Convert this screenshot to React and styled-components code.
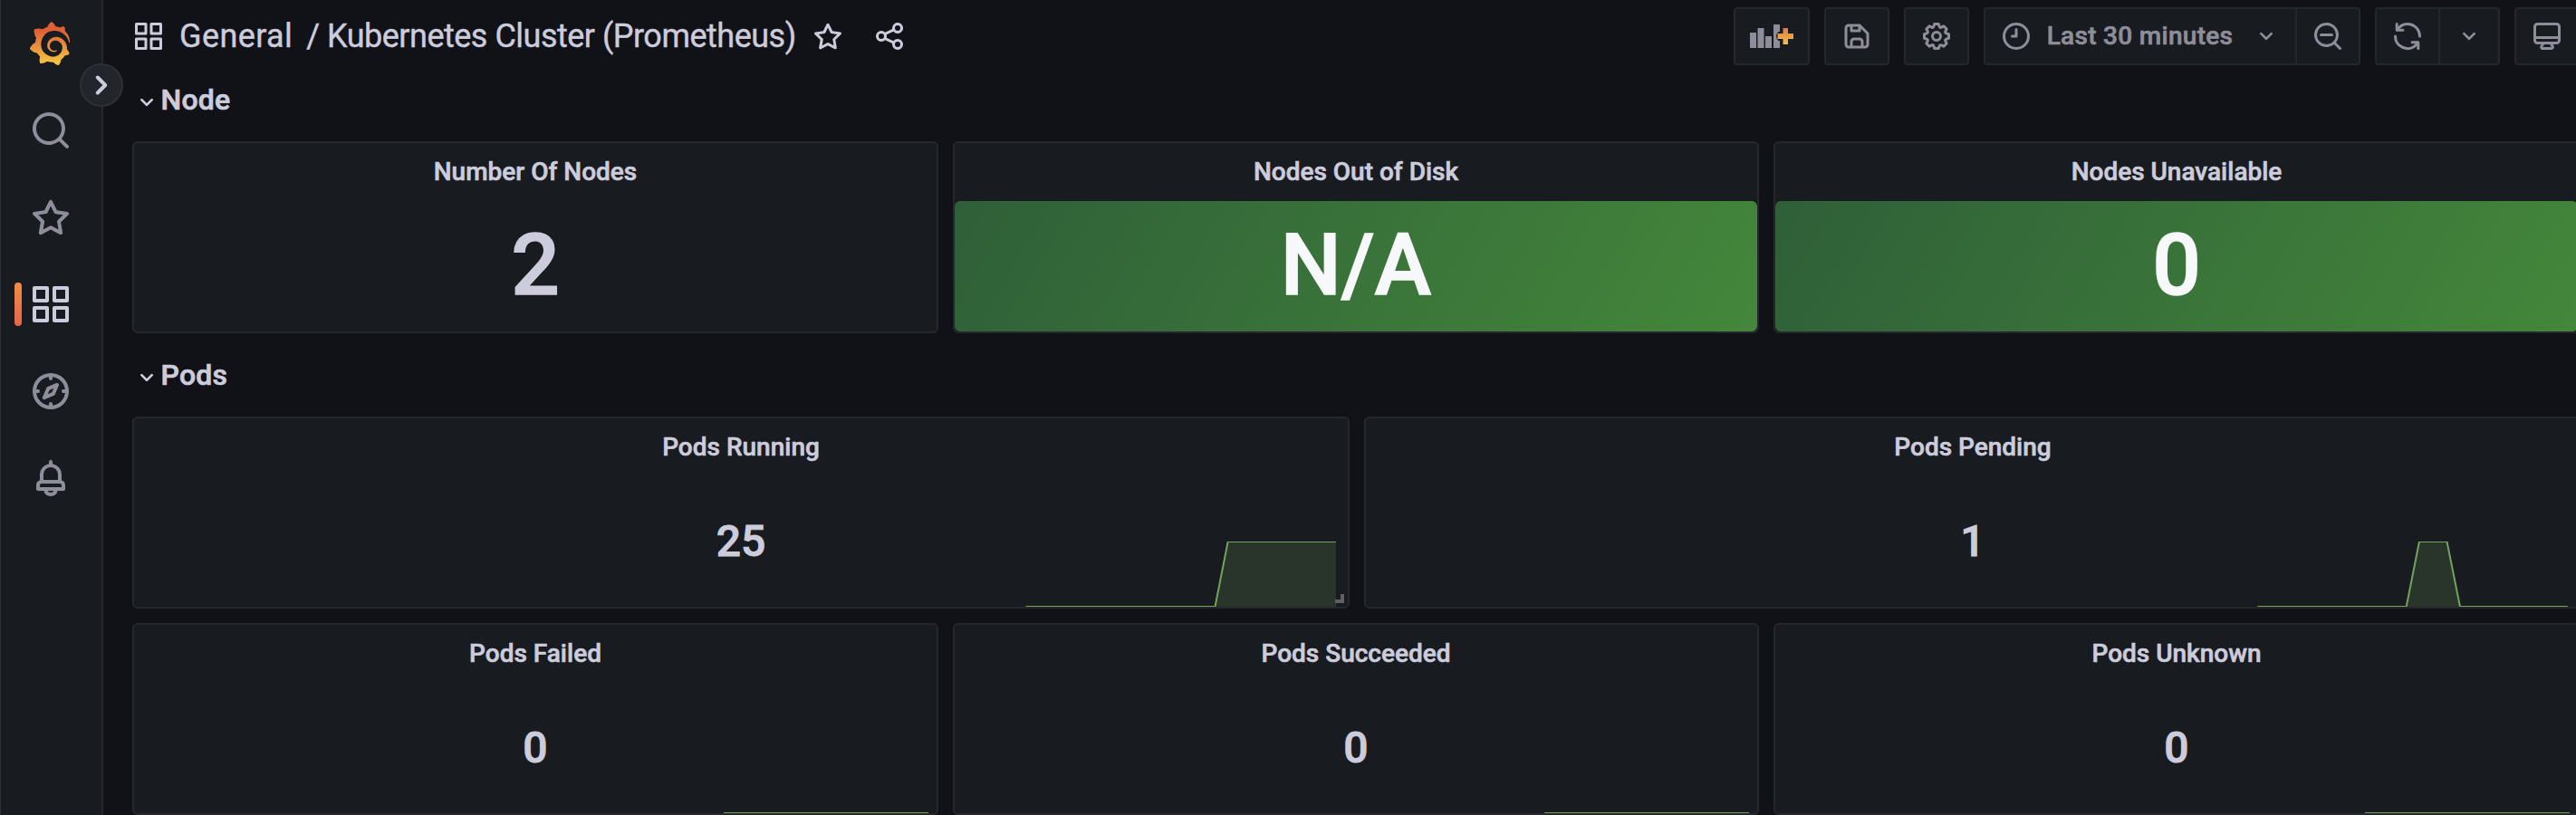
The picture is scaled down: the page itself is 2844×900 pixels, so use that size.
import React from "react";
import styled, { createGlobalStyle } from "styled-components";
import { SiGrafana } from "react-icons/si";

const color = {
  canvas: "#111217",
  surface: "#181b1f",
  raised: "#22252b",
  border: "#25272c",
  text: "#ccccdc",
  muted: "#8e8e9a",
  green: "#73a35b",
};

const GlobalStyle = createGlobalStyle`
  *, *::before, *::after { box-sizing: border-box; }
  html, body { margin: 0; background: ${color.canvas}; }
  body {
    width: 2844px;
    height: 900px;
    overflow: hidden;
    color: ${color.text};
    font-family: Roboto, "Liberation Sans", sans-serif;
  }
`;

const ICONS = {
  search:
    "M21.71,20.29,18,16.61A9,9,0,1,0,16.61,18l3.68,3.68a1,1,0,0,0,1.42,0A1,1,0,0,0,21.71,20.29ZM11,18a7,7,0,1,1,7-7A7,7,0,0,1,11,18Z",
  star: "M22,9.67A1,1,0,0,0,21.14,9l-5.69-.83L12.9,3a1,1,0,0,0-1.8,0L8.55,8.16,2.86,9a1,1,0,0,0-.81.68,1,1,0,0,0,.25,1l4.13,4-1,5.68A1,1,0,0,0,6.9,21.44L12,18.77l5.1,2.67a.93.93,0,0,0,.46.12,1,1,0,0,0,.59-.19,1,1,0,0,0,.4-1l-1-5.68,4.13-4A1,1,0,0,0,22,9.67Zm-6.15,4a1,1,0,0,0-.29.88l.72,4.2-3.76-2a1.06,1.06,0,0,0-.94,0l-3.76,2,.72-4.2a1,1,0,0,0-.29-.88l-3-3,4.21-.61a1,1,0,0,0,.76-.55L12,5.7l1.88,3.82a1,1,0,0,0,.76.55l4.21.61Z",
  apps: "M10,13H3a1,1,0,0,0-1,1v7a1,1,0,0,0,1,1h7a1,1,0,0,0,1-1V14A1,1,0,0,0,10,13ZM9,20H4V15H9ZM21,2H14a1,1,0,0,0-1,1v7a1,1,0,0,0,1,1h7a1,1,0,0,0,1-1V3A1,1,0,0,0,21,2ZM20,9H15V4h5Zm1,4H14a1,1,0,0,0-1,1v7a1,1,0,0,0,1,1h7a1,1,0,0,0,1-1V14A1,1,0,0,0,21,13Zm-1,7H15V15h5ZM10,2H3A1,1,0,0,0,2,3v7a1,1,0,0,0,1,1h7a1,1,0,0,0,1-1V3A1,1,0,0,0,10,2ZM9,9H4V4H9Z",
  compass:
    "M12,2A10,10,0,1,0,22,12,10,10,0,0,0,12,2Zm1,17.93V19a1,1,0,0,0-2,0v.93A8,8,0,0,1,4.07,13H5a1,1,0,0,0,0-2H4.07A8,8,0,0,1,11,4.07V5a1,1,0,0,0,2,0V4.07A8,8,0,0,1,19.93,11H19a1,1,0,0,0,0,2h.93A8,8,0,0,1,13,19.93ZM15.14,7.55l-5,2.12a1,1,0,0,0-.52.52l-2.12,5a1,1,0,0,0,.21,1.1,1,1,0,0,0,.7.3.93.93,0,0,0,.4-.09l5-2.12a1,1,0,0,0,.52-.52l2.12-5a1,1,0,0,0-1.31-1.31Zm-2.49,5.1-2.28,1,1-2.28,2.28-1Z",
  bell: "M18,13.18V10a6,6,0,0,0-5-5.91V3a1,1,0,0,0-2,0V4.09A6,6,0,0,0,6,10v3.18A3,3,0,0,0,4,16v2a1,1,0,0,0,1,1H8.14a4,4,0,0,0,7.72,0H19a1,1,0,0,0,1-1V16A3,3,0,0,0,18,13.18ZM8,10a4,4,0,0,1,8,0v3H8Zm4,10a2,2,0,0,1-1.72-1h3.44A2,2,0,0,1,12,20Zm6-3H6V16a1,1,0,0,1,1-1H17a1,1,0,0,1,1,1Z",
  angleDown:
    "M17,9.17a1,1,0,0,0-1.41,0L12,12.71,8.46,9.17a1,1,0,0,0-1.41,0,1,1,0,0,0,0,1.42l4.24,4.24a1,1,0,0,0,1.42,0L17,10.59A1,1,0,0,0,17,9.17Z",
  angleRight:
    "M14.83,11.29,10.59,7.05a1,1,0,0,0-1.42,0,1,1,0,0,0,0,1.41L12.71,12,9.17,15.54a1,1,0,0,0,0,1.41,1,1,0,0,0,.71.29,1,1,0,0,0,.71-.29l4.24-4.24A1,1,0,0,0,14.83,11.29Z",
  save: "M20.71,9.29l-6-6a1,1,0,0,0-.32-.21A1.09,1.09,0,0,0,14,3H6A3,3,0,0,0,3,6V18a3,3,0,0,0,3,3H18a3,3,0,0,0,3-3V10A1,1,0,0,0,20.71,9.29ZM9,5h4V7H9Zm6,14H9V16a1,1,0,0,1,1-1h4a1,1,0,0,1,1,1Zm4-1a1,1,0,0,1-1,1H17V16a3,3,0,0,0-3-3H10a3,3,0,0,0-3,3v3H6a1,1,0,0,1-1-1V6A1,1,0,0,1,6,5H7V8A1,1,0,0,0,8,9h6a1,1,0,0,0,1-1V6.41l4,4Z",
  cog: "M21.32,9.55l-1.89-.63.89-1.78A1,1,0,0,0,20.13,6L18,3.87a1,1,0,0,0-1.15-.19l-1.78.89-.63-1.89A1,1,0,0,0,13.5,2h-3a1,1,0,0,0-.95.68L8.92,4.57,7.14,3.68A1,1,0,0,0,6,3.87L3.87,6a1,1,0,0,0-.19,1.15l.89,1.78-1.89.63A1,1,0,0,0,2,10.5v3a1,1,0,0,0,.68.95l1.89.63-.89,1.78A1,1,0,0,0,3.87,18L6,20.13a1,1,0,0,0,1.15.19l1.78-.89.63,1.89a1,1,0,0,0,.95.68h3a1,1,0,0,0,.95-.68l.63-1.89,1.78.89A1,1,0,0,0,18,20.13L20.13,18a1,1,0,0,0,.19-1.15l-.89-1.78,1.89-.63A1,1,0,0,0,22,13.5v-3A1,1,0,0,0,21.32,9.55ZM20,12.78l-1.2.4A2,2,0,0,0,17.64,16l.57,1.14-1.1,1.1L16,17.64a2,2,0,0,0-2.79,1.16l-.4,1.2H11.22l-.4-1.2A2,2,0,0,0,8,17.64l-1.14.57-1.1-1.1L6.36,16A2,2,0,0,0,5.2,13.18L4,12.78V11.22l1.2-.4A2,2,0,0,0,6.36,8L5.79,6.89l1.1-1.1L8,6.36A2,2,0,0,0,10.82,5.2l.4-1.2h1.56l.4,1.2A2,2,0,0,0,16,6.36l1.14-.57,1.1,1.1L17.64,8a2,2,0,0,0,1.16,2.79l1.2.4ZM12,8a4,4,0,1,0,4,4A4,4,0,0,0,12,8Zm0,6a2,2,0,1,1,2-2A2,2,0,0,1,12,14Z",
  clock:
    "M12,2A10,10,0,1,0,22,12,10,10,0,0,0,12,2Zm0,18a8,8,0,1,1,8-8A8,8,0,0,1,12,20ZM12,6a1,1,0,0,0-1,1v4H9a1,1,0,0,0,0,2h3a1,1,0,0,0,1-1V7A1,1,0,0,0,12,6Z",
  searchMinus:
    "M21.71,20.29,18,16.61A9,9,0,1,0,16.61,18l3.68,3.68a1,1,0,0,0,1.42,0A1,1,0,0,0,21.71,20.29ZM11,18a7,7,0,1,1,7-7A7,7,0,0,1,11,18Zm4-8H7a1,1,0,0,0,0,2h8a1,1,0,0,0,0-2Z",
  share:
    "M18,14a4,4,0,0,0-3.08,1.48l-5.1-2.35a3.64,3.64,0,0,0,0-2.26l5.1-2.35A4,4,0,1,0,14,6a4.17,4.17,0,0,0,.07.71L8.79,9.14a4,4,0,1,0,0,5.72l5.28,2.43A4.17,4.17,0,0,0,14,18a4,4,0,1,0,4-4ZM18,4a2,2,0,1,1-2,2A2,2,0,0,1,18,4ZM6,14a2,2,0,1,1,2-2A2,2,0,0,1,6,14Zm12,6a2,2,0,1,1,2-2A2,2,0,0,1,18,20Z",
  sync: "M19.91,15.51H15.38a1,1,0,0,0,0,2h2.4A8,8,0,0,1,4,12a1,1,0,0,0-2,0,10,10,0,0,0,16.88,7.23V21a1,1,0,0,0,2,0V16.5A1,1,0,0,0,19.91,15.51ZM12,2A10,10,0,0,0,5.12,4.77V3a1,1,0,0,0-2,0V7.5a1,1,0,0,0,1,1h4.5a1,1,0,0,0,0-2H6.22A8,8,0,0,1,20,12a1,1,0,0,0,2,0A10,10,0,0,0,12,2Z",
  monitor:
    "M19,2H5A3,3,0,0,0,2,5V15a3,3,0,0,0,3,3H7.64l-.58,1a2,2,0,0,0,0,2,2,2,0,0,0,1.75,1h6.46A2,2,0,0,0,17,21a2,2,0,0,0,0-2l-.59-1H19a3,3,0,0,0,3-3V5A3,3,0,0,0,19,2ZM8.77,20,10,18H14l1.2,2ZM20,15a1,1,0,0,1-1,1H5a1,1,0,0,1-1-1V14H20Zm0-3H4V5A1,1,0,0,1,5,4H19a1,1,0,0,1,1,1Z",
};

const IconSvg = styled.svg`
  display: block;
  flex: none;
  width: ${(p) => p.$size}px;
  height: ${(p) => p.$size}px;
  fill: currentColor;
`;

function Icon({ name, size = 36 }) {
  return (
    <IconSvg $size={size} viewBox="0 0 24 24" aria-hidden="true">
      <path d={ICONS[name]} />
    </IconSvg>
  );
}

const Page = styled.div`
  display: flex;
  width: 2844px;
  height: 900px;
  overflow: hidden;
  background: ${color.canvas};
`;

/* ---------- side navigation ---------- */

const Sidebar = styled.nav`
  position: relative;
  flex: none;
  display: flex;
  flex-direction: column;
  width: 114px;
  background: ${color.surface};
  border-left: 1px solid #2f3136;
  border-right: 2px solid ${color.border};
`;

const Brand = styled.div`
  display: flex;
  justify-content: center;
  height: 96px;
  padding: 24px 3px 0 0;
`;

const BrandMark = styled(SiGrafana)`
  width: 48px;
  height: 48px;

  path {
    fill: url(#brand-gradient);
  }
`;

const GradientDefs = styled.svg`
  width: 1px;
  height: 1px;
`;

const NavItem = styled.a`
  display: flex;
  align-items: center;
  height: 96px;
  padding-left: 31px;
  color: ${(p) => (p.$active ? color.text : color.muted)};

  &::before {
    content: "";
    width: 8px;
    height: 48px;
    margin: 0 8px 0 -16px;
    border-radius: 4px;
    background: ${(p) =>
      p.$active ? "linear-gradient(#f18d45, #e5664a)" : "transparent"};
  }
`;

const ExpandButton = styled.button`
  position: absolute;
  z-index: 1;
  top: 70px;
  right: -24px;
  display: flex;
  align-items: center;
  justify-content: center;
  width: 48px;
  height: 48px;
  padding: 0;
  color: ${color.text};
  background: ${color.raised};
  border: 2px solid #2e3036;
  border-radius: 50%;
`;

/* ---------- header ---------- */

const Main = styled.main`
  flex: 1;
  min-width: 0;
  padding: 0 0 0 32px;
`;

const Header = styled.header`
  display: flex;
  align-items: center;
  justify-content: space-between;
  width: 2702px;
  height: 80px;
`;

const Breadcrumb = styled.div`
  display: flex;
  align-items: center;
  font-size: 36px;
  line-height: 48px;
  white-space: nowrap;
  -webkit-text-stroke: 0.4px currentColor;
`;

const Folder = styled.span`
  margin-left: 16px;
  letter-spacing: 0.4px;
`;

const Title = styled.span`
  margin-left: 15px;
  margin-right: 17px;
  letter-spacing: -0.5px;
`;

const Actions = styled.span`
  display: flex;
  gap: 32px;
`;

const Toolbar = styled.div`
  display: flex;
  gap: 16px;
`;

const ButtonGroup = styled.div`
  display: flex;
  height: 64px;
  color: ${color.muted};
  background: ${color.surface};
  border: 2px solid ${color.border};
  border-radius: 4px;
`;

const ToolButton = styled.button`
  display: flex;
  align-items: center;
  justify-content: center;
  width: ${(p) => p.$width}px;
  padding: 0;
  color: inherit;
  background: none;
  border: 0;
  font: 500 28px/32px Roboto, "Liberation Sans", sans-serif;
  letter-spacing: 0.3px;
  white-space: nowrap;

  & + & {
    border-left: 2px solid ${color.border};
  }
`;

const TimeLabel = styled.span`
  margin: 0 21px 0 16px;
  -webkit-text-stroke: 0.6px currentColor;
`;

const PanelAddSvg = styled.svg`
  display: block;
  width: 48px;
  height: 26px;
`;

function PanelAddIcon() {
  return (
    <PanelAddSvg viewBox="0 0 48 26" aria-hidden="true">
      <defs>
        <linearGradient id="plus-gradient" x1="0" y1="0" x2="0" y2="1">
          <stop offset="0" stopColor="#e07b4a" />
          <stop offset="1" stopColor="#f0c344" />
        </linearGradient>
      </defs>
      <path
        fill={color.muted}
        d="M0 9h7v17H0zM8.5 4h7v22h-7zM17 13h7v13h-7zM26 0h7v8h-1.5q-2.500 2.500-2.500 5t2.500 5H33v8h-7z"
      />
      <path
        fill="url(#plus-gradient)"
        d="M36.500 4h5.500v6h6v6h-6v6h-5.500v-6h-6v-6h6z"
      />
    </PanelAddSvg>
  );
}

/* ---------- dashboard ---------- */

const Dashboard = styled.div`
  display: flex;
  flex-direction: column;
  gap: 16px;
  width: 2704px;
`;

const RowTitle = styled.h2`
  display: flex;
  align-items: center;
  height: 60px;
  margin: 0;
  font-size: 32px;
  font-weight: 500;
  line-height: 60px;
  letter-spacing: 0.2px;
  -webkit-text-stroke: 0.7px currentColor;

  svg {
    margin-top: 5px;
    margin-right: -0.5px;
  }
`;

const PanelRow = styled.div`
  display: grid;
  grid-template-columns: ${(p) => p.$columns};
  gap: 16px;
`;

const PanelBox = styled.section`
  position: relative;
  display: flex;
  flex-direction: column;
  height: 212px;
  background: ${color.surface};
  border: 2px solid ${color.border};
  border-radius: 6px;
`;

const PanelTitle = styled.h3`
  height: 64px;
  margin: 0;
  font-size: 28px;
  font-weight: 500;
  line-height: 64px;
  text-align: center;
  -webkit-text-stroke: 0.6px currentColor;
`;

const PanelContent = styled.div`
  flex: 1;
  display: grid;
  border-radius: 6px;
  background: ${(p) =>
    p.$filled ? "linear-gradient(120deg, #2f5f38, #44873b)" : "none"};
  color: ${(p) => (p.$filled ? "#f7f8fa" : color.text)};
`;

const Value = styled.div`
  grid-area: 1 / 1;
  place-self: center;
  padding-bottom: ${(p) => (p.$large ? 3 : 0)}px;
  font-size: ${(p) => (p.$large ? 94.5 : 48)}px;
  font-weight: 500;
  line-height: 1.2;
  -webkit-text-stroke: ${(p) => (p.$large ? 1.4 : 0.9)}px currentColor;
`;

const Chart = styled.svg`
  grid-area: 1 / 1;
  place-self: end;
  display: block;
  width: 344px;
  height: 72px;
  margin-right: ${(p) => p.$inset}px;
  overflow: hidden;
`;

const ResizeHandle = styled.span`
  position: absolute;
  right: 4px;
  bottom: 4px;
  width: 10px;
  height: 10px;
  border-right: 4px solid #606062;
  border-bottom: 4px solid #606062;
`;

function Sparkline({ points, inset }) {
  const first = points[0][0];
  const last = points[points.length - 1][0];
  const line = points.map((p) => p.join(",")).join(" ");
  return (
    <Chart $inset={inset} viewBox="0 0 344 72" aria-hidden="true">
      <polygon
        points={`${first},72 ${line} ${last},72`}
        fill={color.green}
        fillOpacity="0.19"
      />
      <polyline
        points={line}
        fill="none"
        stroke={color.green}
        strokeWidth="2"
      />
    </Chart>
  );
}

function Panel({ title, value, filled, large, trend, inset = 13, resizable }) {
  return (
    <PanelBox>
      <PanelTitle>{title}</PanelTitle>
      <PanelContent $filled={filled}>
        <Value $large={large}>{value}</Value>
        {trend && <Sparkline points={trend} inset={inset} />}
      </PanelContent>
      {resizable && <ResizeHandle />}
    </PanelBox>
  );
}

const HALVES = "1344px 1344px";
const THIRDS = "890px 890px 890px";

const RUNNING = [
  [1.5, 72],
  [210.5, 72],
  [224.7, 0],
  [344, 0],
];
const PENDING = [
  [1.5, 72],
  [165.7, 72],
  [180, 0],
  [210.5, 0],
  [225, 72],
  [344, 72],
];
const FLAT = [
  [118, 72],
  [344, 72],
];

export default function App() {
  return (
    <>
      <GlobalStyle />
      <Page>
        <Sidebar>
          <Brand>
            <BrandMark />
          </Brand>
          <NavItem>
            <Icon name="search" size={48} />
          </NavItem>
          <NavItem>
            <Icon name="star" size={48} />
          </NavItem>
          <NavItem $active>
            <Icon name="apps" size={48} />
          </NavItem>
          <NavItem>
            <Icon name="compass" size={48} />
          </NavItem>
          <NavItem>
            <Icon name="bell" size={48} />
          </NavItem>
          <ExpandButton>
            <Icon name="angleRight" size={48} />
          </ExpandButton>
          <GradientDefs aria-hidden="true">
            <defs>
              <linearGradient id="brand-gradient" x1="0" y1="0" x2="0" y2="1">
                <stop offset="0.2" stopColor="#df5f36" />
                <stop offset="0.55" stopColor="#e88f3c" />
                <stop offset="1" stopColor="#f5cb45" />
              </linearGradient>
            </defs>
          </GradientDefs>
        </Sidebar>
        <Main>
          <Header>
            <Breadcrumb>
              <Icon name="apps" />
              <Folder>General</Folder>
              <Title>/ Kubernetes Cluster (Prometheus)</Title>
              <Actions>
                <Icon name="star" />
                <Icon name="share" />
              </Actions>
            </Breadcrumb>
            <Toolbar>
              <ButtonGroup>
                <ToolButton $width={80}>
                  <PanelAddIcon />
                </ToolButton>
              </ButtonGroup>
              <ButtonGroup>
                <ToolButton $width={68}>
                  <Icon name="save" />
                </ToolButton>
              </ButtonGroup>
              <ButtonGroup>
                <ToolButton $width={68}>
                  <Icon name="cog" />
                </ToolButton>
              </ButtonGroup>
              <ButtonGroup>
                <ToolButton $width={342}>
                  <Icon name="clock" />
                  <TimeLabel>Last 30 minutes</TimeLabel>
                  <Icon name="angleDown" size={32} />
                </ToolButton>
                <ToolButton $width={70}>
                  <Icon name="searchMinus" />
                </ToolButton>
              </ButtonGroup>
              <ButtonGroup>
                <ToolButton $width={68}>
                  <Icon name="sync" />
                </ToolButton>
                <ToolButton $width={66}>
                  <Icon name="angleDown" size={32} />
                </ToolButton>
              </ButtonGroup>
              <ButtonGroup>
                <ToolButton $width={68}>
                  <Icon name="monitor" />
                </ToolButton>
              </ButtonGroup>
            </Toolbar>
          </Header>
          <Dashboard>
            <RowTitle>
              <Icon name="angleDown" size={32} />
              Node
            </RowTitle>
            <PanelRow $columns={THIRDS}>
              <Panel title="Number Of Nodes" value="2" large />
              <Panel title="Nodes Out of Disk" value="N/A" large filled />
              <Panel title="Nodes Unavailable" value="0" large filled />
            </PanelRow>
            <RowTitle>
              <Icon name="angleDown" size={32} />
              Pods
            </RowTitle>
            <PanelRow $columns={HALVES}>
              <Panel title="Pods Running" value="25" trend={RUNNING} resizable />
              <Panel title="Pods Pending" value="1" trend={PENDING} />
            </PanelRow>
            <PanelRow $columns={THIRDS}>
              <Panel title="Pods Failed" value="0" trend={FLAT} inset={9} />
              <Panel title="Pods Succeeded" value="0" trend={FLAT} inset={9} />
              <Panel title="Pods Unknown" value="0" trend={FLAT} inset={9} />
            </PanelRow>
          </Dashboard>
        </Main>
      </Page>
    </>
  );
}
